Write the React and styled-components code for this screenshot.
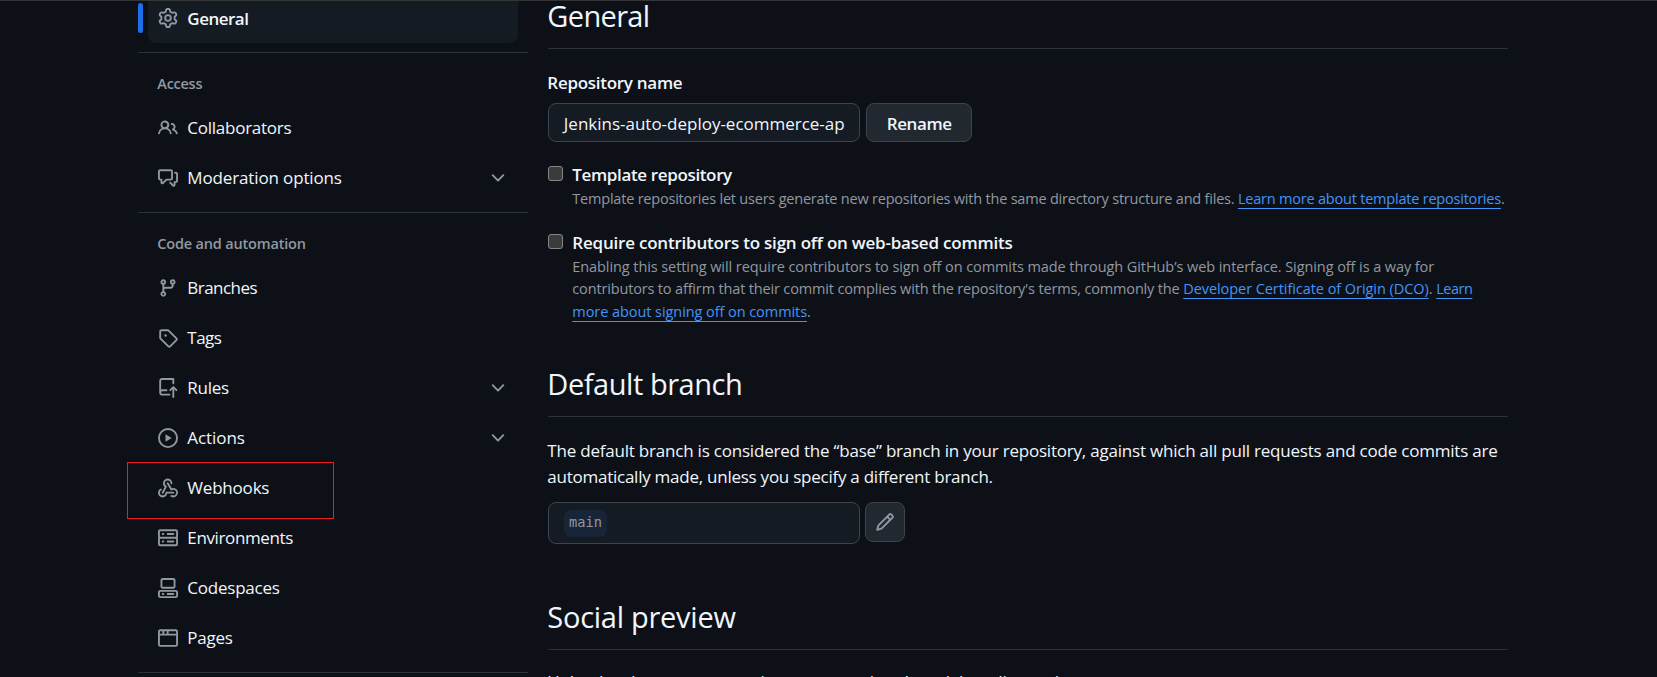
import React from "react";
import styled, { createGlobalStyle, css } from "styled-components";

const GlobalStyle = createGlobalStyle`
  * { box-sizing: border-box; }
  html, body { margin: 0; padding: 0; background: #0d1117; }
  body { height: 677px; overflow: hidden; }
`;

const SANS = `"Open Sans", "Noto Sans", sans-serif`;

const tracked = css`
  letter-spacing: ${(p) => p.$ls || 0}px;
  text-indent: -0.7px;
  white-space: nowrap;
`;

const Page = styled.div`
  height: 677px;
  overflow: hidden;
  border-top: 1px solid #343534;
  padding: 0 149px 0 138px;
  display: flex;
  gap: 20px;
  background: #0d1117;
  color: #f0f6fc;
  font-family: ${SANS};
  font-size: 17px;
`;

const Sidebar = styled.nav`
  width: 390px;
  flex: none;
  margin-top: -8px;
`;

const NavRow = styled.a`
  position: relative;
  display: flex;
  align-items: center;
  height: 50px;
  margin: 0 10px;
  padding: 0 10px;
  border-radius: 8px;
  color: #f0f6fc;
  background: ${(p) => (p.$active ? "#151b23" : "transparent")};
  font-weight: ${(p) => (p.$active ? 600 : 400)};
`;

const ActiveBar = styled.span`
  position: absolute;
  left: -10px;
  top: 10px;
  width: 5px;
  height: 30px;
  border-radius: 3px;
  background: #1f6feb;
`;

const NavLabel = styled.span`
  flex: 1;
  margin-left: 10px;
  padding-bottom: ${(p) => (p.$active ? 0 : 2)}px;
  ${tracked}
`;

const Highlight = styled.span`
  position: absolute;
  left: -21px;
  top: -1px;
  width: 207px;
  height: 57px;
  border: 1px solid #ed1c24;
`;

const Icon = styled.svg`
  width: 20px;
  height: 20px;
  flex: none;
  fill: #9198a1;
`;

const NavDivider = styled.div`
  height: 1px;
  margin: 9px 0 10px;
  background: #2b3138;
`;

const GroupTitle = styled.div`
  height: 40px;
  line-height: 41px;
  padding-left: 20px;
  font-size: 14.5px;
  font-weight: 600;
  color: #9198a1;
  ${tracked}
`;

const Main = styled.main`
  width: 960px;
  flex: none;
  margin-top: -5px;
`;

const Heading = styled.h2`
  margin: ${(p) => p.$top || 0}px 0 0;
  padding-bottom: 12px;
  border-bottom: 1px solid #2b3138;
  font-size: 29px;
  font-weight: 400;
  line-height: 40px;
  ${tracked}
`;

const FieldLabel = styled.div`
  margin-top: 21px;
  font-weight: 600;
  line-height: 26px;
  ${tracked}
`;

const FieldRow = styled.div`
  display: flex;
  gap: 6px;
  margin-top: 7px;
`;

const NameInput = styled.div`
  width: 312px;
  height: 39px;
  padding: 0 15.5px;
  border: 1px solid #3d444d;
  border-radius: 8px;
  background: #151b23;
  line-height: 39px;
  overflow: hidden;
  ${tracked}
`;

const RenameButton = styled.button`
  width: 106px;
  height: 39px;
  padding: 1px 0 0 1px;
  border: 1px solid #3d444d;
  border-radius: 8px;
  background: #212830;
  color: #f0f6fc;
  font: 600 17px ${SANS};
  ${tracked}
`;

const OptionList = styled.div`
  display: flex;
  flex-direction: column;
  gap: 18px;
  margin-top: 19px;
`;

const Option = styled.div`
  display: flex;
  gap: 10px;
`;

const Checkbox = styled.span`
  width: 15px;
  height: 15px;
  flex: none;
  margin-top: 5px;
  border: 1px solid #858585;
  border-radius: 3px;
  background: #3b3b3b;
`;

const OptionTitle = styled.div`
  padding-top: 1px;
  font-weight: 600;
  line-height: 26px;
  ${tracked}
`;

const DescLine = styled.div`
  font-size: 14.5px;
  line-height: 22.5px;
  color: #9198a1;
  text-indent: -0.7px;
  white-space: pre;
`;

const Run = styled.span`
  letter-spacing: ${(p) => p.$ls || 0}px;
`;

const Link = styled.a`
  color: #4493f8;
  letter-spacing: ${(p) => p.$ls || 0}px;
  text-decoration: underline;
  text-decoration-thickness: 1px;
  text-decoration-skip-ink: none;
  text-underline-offset: 4px;
`;

const Paragraph = styled.div`
  margin-top: ${(p) => p.$top}px;
`;

const TextLine = styled.div`
  line-height: 26.25px;
  ${tracked}
`;

const BranchRow = styled.div`
  display: flex;
  align-items: flex-start;
  gap: 5px;
  margin-top: 12.2px;
`;

const BranchBox = styled.div`
  display: flex;
  align-items: center;
  width: 312px;
  height: 42px;
  padding: 0 15px;
  border: 1px solid #3d444d;
  border-radius: 8px;
  background: #151b23;
`;

const BranchName = styled.span`
  height: 27px;
  padding: 0 5px;
  border-radius: 7.5px;
  background: #182538;
  color: #9198a1;
  font: 13.7px/25px "DejaVu Sans Mono", "Liberation Mono", monospace;
`;

const IconButton = styled.button`
  display: flex;
  align-items: center;
  justify-content: center;
  width: 40px;
  height: 40px;
  padding: 0;
  border: 1px solid #3d444d;
  border-radius: 8px;
  background: #212830;
`;

const ICONS = {
  gear: "M8 0a8.2 8.2 0 0 1 .701.031C9.444.095 9.99.645 10.16 1.29l.288 1.107c.018.066.079.158.212.224.231.114.454.243.668.386.123.082.233.09.299.071l1.103-.303c.644-.176 1.392.021 1.82.63.27.385.506.792.704 1.218.315.675.111 1.422-.364 1.891l-.814.806c-.049.048-.098.147-.088.294.016.257.016.515 0 .772-.01.147.038.246.088.294l.814.806c.475.469.679 1.216.364 1.891a7.977 7.977 0 0 1-.704 1.217c-.428.61-1.176.807-1.82.63l-1.102-.302c-.067-.019-.177-.011-.3.071a5.909 5.909 0 0 1-.668.386c-.133.066-.194.158-.211.224l-.29 1.106c-.168.646-.715 1.196-1.458 1.26a8.006 8.006 0 0 1-1.402 0c-.743-.064-1.289-.614-1.458-1.26l-.289-1.106c-.018-.066-.079-.158-.212-.224a5.738 5.738 0 0 1-.668-.386c-.123-.082-.233-.09-.299-.071l-1.103.303c-.644.176-1.392-.021-1.82-.63a8.12 8.12 0 0 1-.704-1.218c-.315-.675-.111-1.422.363-1.891l.815-.806c.05-.048.098-.147.088-.294a6.214 6.214 0 0 1 0-.772c.01-.147-.038-.246-.088-.294l-.815-.806C.635 6.045.431 5.298.746 4.623a7.92 7.92 0 0 1 .704-1.217c.428-.61 1.176-.807 1.82-.63l1.102.302c.067.019.177.011.3-.071.214-.143.437-.272.668-.386.133-.066.194-.158.211-.224l.29-1.106C6.009.645 6.556.095 7.299.03 7.53.01 7.764 0 8 0Zm-.571 1.525c-.036.003-.108.036-.137.146l-.289 1.105c-.147.561-.549.967-.998 1.189-.173.086-.34.183-.5.29-.417.278-.97.423-1.529.27l-1.103-.303c-.109-.03-.175.016-.195.045-.22.312-.412.644-.573.99-.014.031-.021.11.059.19l.815.806c.411.406.562.957.53 1.456a4.709 4.709 0 0 0 0 .582c.032.499-.119 1.05-.53 1.456l-.815.806c-.081.08-.073.159-.059.19.162.346.353.677.573.989.02.03.085.076.195.046l1.102-.303c.56-.153 1.113-.008 1.53.27.161.107.328.204.501.29.447.222.85.629.997 1.189l.289 1.105c.029.109.101.143.137.146a6.6 6.6 0 0 0 1.142 0c.036-.003.108-.036.137-.146l.289-1.105c.147-.561.549-.967.998-1.189.173-.086.34-.183.5-.29.417-.278.97-.423 1.529-.27l1.103.303c.109.029.175-.016.195-.045.22-.313.411-.644.573-.99.014-.031.021-.11-.059-.19l-.815-.806c-.411-.406-.562-.957-.53-1.456a4.709 4.709 0 0 0 0-.582c-.032-.499.119-1.05.53-1.456l.815-.806c.081-.08.073-.159.059-.19a6.464 6.464 0 0 0-.573-.989c-.02-.03-.085-.076-.195-.046l-1.102.303c-.56.153-1.113.008-1.53-.27a4.44 4.44 0 0 0-.501-.29c-.447-.222-.85-.629-.997-1.189l-.289-1.105c-.029-.11-.101-.143-.137-.146a6.6 6.6 0 0 0-1.142 0ZM11 8a3 3 0 1 1-6 0 3 3 0 0 1 6 0ZM9.5 8a1.5 1.5 0 1 0-3.001.001A1.5 1.5 0 0 0 9.5 8Z",
  people: "M2 5.5a3.5 3.5 0 1 1 5.898 2.549 5.508 5.508 0 0 1 3.034 4.084.75.75 0 1 1-1.482.235 4 4 0 0 0-7.9 0 .75.75 0 0 1-1.482-.236A5.507 5.507 0 0 1 3.102 8.05 3.493 3.493 0 0 1 2 5.5ZM11 4a3.001 3.001 0 0 1 2.22 5.018 5.01 5.01 0 0 1 2.56 3.012.749.749 0 0 1-.885.954.752.752 0 0 1-.549-.514 3.507 3.507 0 0 0-2.522-2.372.75.75 0 0 1-.574-.73v-.352a.75.75 0 0 1 .416-.672A1.5 1.5 0 0 0 11 5.5.75.75 0 0 1 11 4Zm-5.5-.5a2 2 0 1 0-.001 3.999A2 2 0 0 0 5.5 3.5Z",
  discussion: "M1.75 1h8.5c.966 0 1.75.784 1.75 1.75v5.5A1.75 1.75 0 0 1 10.25 10H7.061l-2.574 2.573A1.458 1.458 0 0 1 2 11.543V10h-.25A1.75 1.75 0 0 1 0 8.25v-5.5C0 1.784.784 1 1.75 1ZM1.5 2.75v5.5c0 .138.112.25.25.25h1a.75.75 0 0 1 .75.75v2.19l2.72-2.72a.749.749 0 0 1 .53-.22h3.5a.25.25 0 0 0 .25-.25v-5.5a.25.25 0 0 0-.25-.25h-8.5a.25.25 0 0 0-.25.25Zm13 2a.25.25 0 0 0-.25-.25h-.5a.75.75 0 0 1 0-1.5h.5c.966 0 1.75.784 1.75 1.75v5.5A1.75 1.75 0 0 1 14.25 12H14v1.543a1.458 1.458 0 0 1-2.487 1.03L9.22 12.28a.749.749 0 0 1 .326-1.275.749.749 0 0 1 .734.215l2.22 2.22v-2.19a.75.75 0 0 1 .75-.75h1a.25.25 0 0 0 .25-.25Z",
  branch: "M9.5 3.25a2.25 2.25 0 1 1 3 2.122V6A2.5 2.5 0 0 1 10 8.5H6a1 1 0 0 0-1 1v1.128a2.251 2.251 0 1 1-1.5 0V5.372a2.25 2.25 0 1 1 1.5 0v1.836A2.493 2.493 0 0 1 6 7h4a1 1 0 0 0 1-1v-.628A2.25 2.25 0 0 1 9.5 3.25Zm-6 0a.75.75 0 1 0 1.5 0 .75.75 0 0 0-1.5 0Zm8.25-.75a.75.75 0 1 0 0 1.5.75.75 0 0 0 0-1.5ZM4.25 12a.75.75 0 1 0 0 1.5.75.75 0 0 0 0-1.5Z",
  tag: "M1 7.775V2.75C1 1.784 1.784 1 2.75 1h5.025c.464 0 .91.184 1.238.513l6.25 6.25a1.75 1.75 0 0 1 0 2.474l-5.026 5.026a1.75 1.75 0 0 1-2.474 0l-6.25-6.25A1.752 1.752 0 0 1 1 7.775Zm1.5 0c0 .066.026.13.073.177l6.25 6.25a.25.25 0 0 0 .354 0l5.025-5.025a.25.25 0 0 0 0-.354l-6.25-6.25a.25.25 0 0 0-.177-.073H2.75a.25.25 0 0 0-.25.25ZM6 5a1 1 0 1 1 0 2 1 1 0 0 1 0-2Z",
  repoPush: "M1 2.5A2.5 2.5 0 0 1 3.5 0h8.75a.75.75 0 0 1 .75.75v3.5a.75.75 0 0 1-1.5 0V1.5h-8a1 1 0 0 0-1 1v6.708A2.493 2.493 0 0 1 3.5 9h3.25a.75.75 0 0 1 0 1.5H3.5a1 1 0 0 0 0 2h5.75a.75.75 0 0 1 0 1.5H3.5A2.5 2.5 0 0 1 1 11.5Zm13.23 7.79h-.001l-1.224-1.224v6.184a.75.75 0 0 1-1.5 0V9.066L10.28 10.29a.75.75 0 0 1-1.06-1.061l2.505-2.504a.75.75 0 0 1 1.06 0L15.29 9.23a.751.751 0 0 1-.018 1.042.751.751 0 0 1-1.042.018Z",
  play: "M8 0a8 8 0 1 1 0 16A8 8 0 0 1 8 0ZM1.5 8a6.5 6.5 0 1 0 13 0 6.5 6.5 0 0 0-13 0Zm4.879-2.773 4.264 2.559a.25.25 0 0 1 0 .428l-4.264 2.559A.25.25 0 0 1 6 10.559V5.442a.25.25 0 0 1 .379-.215Z",
  webhook: "M5.5 4.25a2.25 2.25 0 0 1 4.5 0 .75.75 0 0 0 1.5 0 3.75 3.75 0 1 0-6.14 2.889l-2.272 4.258a.75.75 0 0 0 1.324.706L7 7.25a.75.75 0 0 0-.309-1.015A2.25 2.25 0 0 1 5.5 4.25Z M7.364 3.607a.75.75 0 0 1 1.03.257l2.608 4.349a3.75 3.75 0 1 1-.628 6.785.75.75 0 0 1 .752-1.299 2.25 2.25 0 1 0-.033-3.88.75.75 0 0 1-1.03-.256L7.107 4.636a.75.75 0 0 1 .257-1.03Z M2.9 8.776A.75.75 0 0 1 2.625 9.8 2.25 2.25 0 1 0 6 11.75a.75.75 0 0 1 .75-.751h5.5a.75.75 0 0 1 0 1.5H7.425a3.751 3.751 0 1 1-5.55-3.998.75.75 0 0 1 1.024.274Z",
  server: "M1.75 1h12.5c.966 0 1.75.784 1.75 1.75v4c0 .372-.116.717-.314 1 .198.283.314.628.314 1v4a1.75 1.75 0 0 1-1.75 1.75H1.75A1.75 1.75 0 0 1 0 12.75v-4c0-.358.109-.707.314-1a1.739 1.739 0 0 1-.314-1v-4C0 1.784.784 1 1.75 1ZM1.5 2.75v4c0 .138.112.25.25.25h12.5a.25.25 0 0 0 .25-.25v-4a.25.25 0 0 0-.25-.25H1.75a.25.25 0 0 0-.25.25Zm.25 5.75a.25.25 0 0 0-.25.25v4c0 .138.112.25.25.25h12.5a.25.25 0 0 0 .25-.25v-4a.25.25 0 0 0-.25-.25ZM7 4.75A.75.75 0 0 1 7.75 4h4.5a.75.75 0 0 1 0 1.5h-4.5A.75.75 0 0 1 7 4.75ZM7.75 10h4.5a.75.75 0 0 1 0 1.5h-4.5a.75.75 0 0 1 0-1.5ZM3 4.75A.75.75 0 0 1 3.75 4h.5a.75.75 0 0 1 0 1.5h-.5A.75.75 0 0 1 3 4.75ZM3.75 10h.5a.75.75 0 0 1 0 1.5h-.5a.75.75 0 0 1 0-1.5Z",
  codespaces: "M0 11.25c0-.966.784-1.75 1.75-1.75h12.5c.966 0 1.75.784 1.75 1.75v3A1.75 1.75 0 0 1 14.25 16H1.75A1.75 1.75 0 0 1 0 14.25Zm2-9.5C2 .784 2.784 0 3.75 0h8.5C13.216 0 14 .784 14 1.75v5a1.75 1.75 0 0 1-1.75 1.75h-8.5A1.75 1.75 0 0 1 2 6.75Zm1.75-.25a.25.25 0 0 0-.25.25v5c0 .138.112.25.25.25h8.5a.25.25 0 0 0 .25-.25v-5a.25.25 0 0 0-.25-.25Zm-2 9.5a.25.25 0 0 0-.25.25v3c0 .138.112.25.25.25h12.5a.25.25 0 0 0 .25-.25v-3a.25.25 0 0 0-.25-.25Z M7 12.75a.75.75 0 0 1 .75-.75h4.5a.75.75 0 0 1 0 1.5h-4.5a.75.75 0 0 1-.75-.75Zm-4 0a.75.75 0 0 1 .75-.75h.5a.75.75 0 0 1 0 1.5h-.5a.75.75 0 0 1-.75-.75Z",
  browser: "M0 2.75C0 1.784.784 1 1.75 1h12.5c.966 0 1.75.784 1.75 1.75v10.5A1.75 1.75 0 0 1 14.25 15H1.75A1.75 1.75 0 0 1 0 13.25ZM14.5 6h-13v7.25c0 .138.112.25.25.25h12.5a.25.25 0 0 0 .25-.25Zm-6-3.5v2h6V2.75a.25.25 0 0 0-.25-.25ZM5 2.5v2h2v-2Zm-3.25 0a.25.25 0 0 0-.25.25V4.5h2v-2Z",
  pencil: "M11.013 1.427a1.75 1.75 0 0 1 2.474 0l1.086 1.086a1.75 1.75 0 0 1 0 2.474l-8.61 8.61c-.21.21-.47.364-.756.445l-3.251.93a.75.75 0 0 1-.927-.928l.929-3.25c.081-.286.235-.547.445-.758l8.61-8.61Zm.176 4.823L9.75 4.81l-6.286 6.287a.253.253 0 0 0-.064.108l-.558 1.953 1.953-.558a.253.253 0 0 0 .108-.064Zm1.238-3.763a.25.25 0 0 0-.354 0L10.811 3.75l1.439 1.44 1.263-1.263a.25.25 0 0 0 0-.354Z",
  chevron: "M12.78 5.22a.749.749 0 0 1 0 1.06l-4.25 4.25a.749.749 0 0 1-1.06 0L3.22 6.28a.749.749 0 1 1 1.06-1.06L8 8.939l3.72-3.719a.749.749 0 0 1 1.06 0Z",
};

const Glyph = ({ name }) => (
  <Icon viewBox="0 0 16 16" aria-hidden="true">
    <path d={ICONS[name]} />
  </Icon>
);

function NavItem({ icon, ls, active, expandable, highlighted, children }) {
  return (
    <NavRow $active={active}>
      {active && <ActiveBar />}
      <Glyph name={icon} />
      <NavLabel $ls={ls} $active={active}>{children}</NavLabel>
      {expandable && <Glyph name="chevron" />}
      {highlighted && <Highlight />}
    </NavRow>
  );
}

export default function App() {
  return (
    <Page>
      <GlobalStyle />
      <Sidebar>
        <NavItem icon="gear" ls={-0.5} active>General</NavItem>
        <NavDivider />
        <GroupTitle $ls={-0.26}>Access</GroupTitle>
        <NavItem icon="people" ls={-0.25}>Collaborators</NavItem>
        <NavItem icon="discussion" ls={-0.14} expandable>Moderation options</NavItem>
        <NavDivider />
        <GroupTitle $ls={-0.18}>Code and automation</GroupTitle>
        <NavItem icon="branch" ls={-0.55}>Branches</NavItem>
        <NavItem icon="tag" ls={-0.5}>Tags</NavItem>
        <NavItem icon="repoPush" ls={-0.25} expandable>Rules</NavItem>
        <NavItem icon="play" ls={-0.06} expandable>Actions</NavItem>
        <NavItem icon="webhook" ls={-0.2} highlighted>Webhooks</NavItem>
        <NavItem icon="server" ls={-0.37}>Environments</NavItem>
        <NavItem icon="codespaces" ls={-0.23}>Codespaces</NavItem>
        <NavItem icon="browser" ls={-0.25}>Pages</NavItem>
        <NavDivider />
      </Sidebar>
      <Main>
        <Heading $ls={-0.65}>General</Heading>
        <FieldLabel $ls={-0.28}>Repository name</FieldLabel>
        <FieldRow>
          <NameInput $ls={-0.01}>Jenkins-auto-deploy-ecommerce-ap</NameInput>
          <RenameButton $ls={-0.42}>Rename</RenameButton>
        </FieldRow>
        <OptionList>
          <Option>
            <Checkbox />
            <div>
              <OptionTitle $ls={-0.36}>Template repository</OptionTitle>
              <DescLine>
                <Run $ls={-0.21}>{"Template repositories let users generate new repositories with the same directory structure and files. "}</Run>
                <Link $ls={-0.21}>Learn more about template repositories</Link>.
              </DescLine>
            </div>
          </Option>
          <Option>
            <Checkbox />
            <div>
              <OptionTitle $ls={-0.21}>Require contributors to sign off on web-based commits</OptionTitle>
              <DescLine>
                <Run $ls={-0.082}>Enabling this setting will require contributors to sign off on commits made through GitHub’s web interface. Signing off is a way for</Run>
              </DescLine>
              <DescLine>
                <Run $ls={-0.158}>{"contributors to affirm that their commit complies with the repository's terms, commonly the "}</Run>
                <Link $ls={-0.06}>Developer Certificate of Origin (DCO)</Link>
                {". "}
                <Link $ls={-0.5}>Learn</Link>
              </DescLine>
              <DescLine>
                <Link $ls={-0.065}>more about signing off on commits</Link>.
              </DescLine>
            </div>
          </Option>
        </OptionList>
        <Heading $top={41} $ls={-0.45}>Default branch</Heading>
        <Paragraph $top={20.6}>
          <TextLine $ls={-0.208}>The default branch is considered the “base” branch in your repository, against which all pull requests and code commits are</TextLine>
          <TextLine $ls={-0.25}>automatically made, unless you specify a different branch.</TextLine>
        </Paragraph>
        <BranchRow>
          <BranchBox>
            <BranchName>main</BranchName>
          </BranchBox>
          <IconButton>
            <Glyph name="pencil" />
          </IconButton>
        </BranchRow>
        <Heading $top={53} $ls={-0.26}>Social preview</Heading>
        <Paragraph $top={18.4}>
          <TextLine $ls={-0.19}>Upload an image to customize your repository’s social media preview.</TextLine>
        </Paragraph>
      </Main>
    </Page>
  );
}
